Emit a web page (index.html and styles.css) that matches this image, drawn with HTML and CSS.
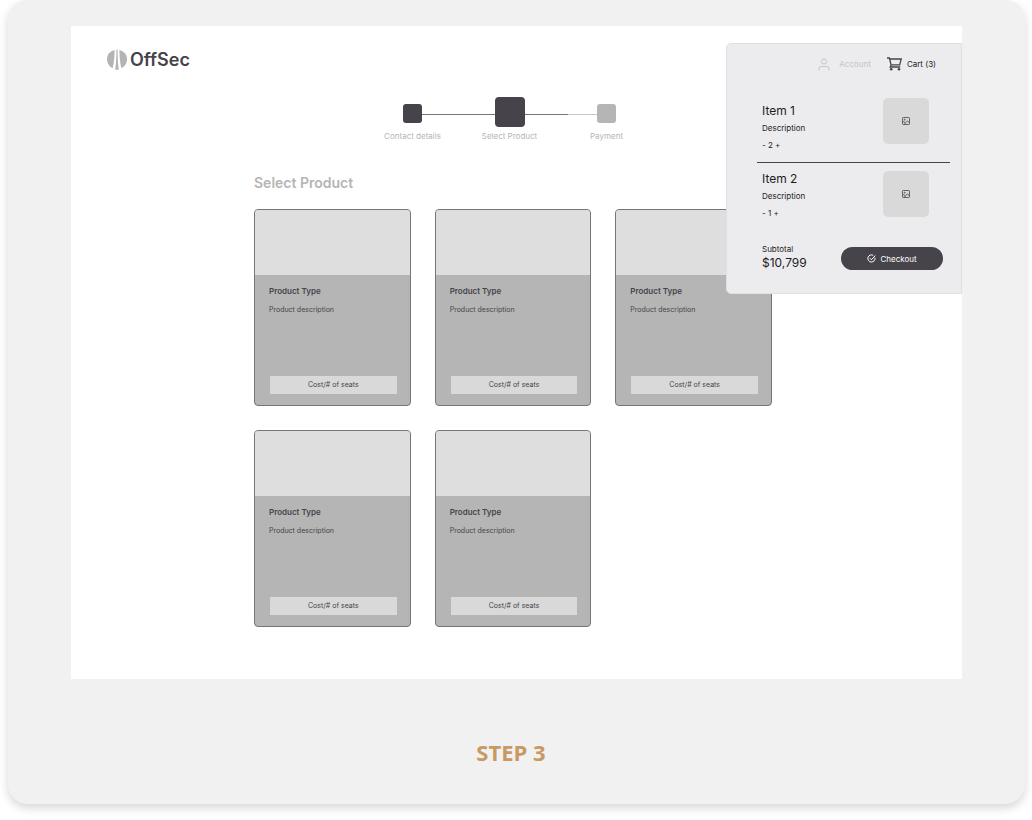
FILE: index.html
```html
<!DOCTYPE html>
<html lang="en">
<head>
    <meta charset="UTF-8">
    <meta name="viewport" content="width=device-width, initial-scale=1.0">
    <title>OffSec - Select Product</title>
    <link rel="stylesheet" href="styles.css">
</head>
<body>
    <div class="board">
        <div class="screen">
            <header class="header">
                <a class="logo" href="#">
                    <svg width="20" height="22" viewBox="0 0 20 22" aria-hidden="true">
                        <path d="M7.600 1C3 2 0 5.700 0 10s2.300 7.600 5.600 9.200C7 14 7.600 8 7.600 1z"/>
                        <path d="M12.400 1c4.600 1 7.600 4.700 7.600 9s-2.300 7.600-5.600 9.200C13 14 12.400 8 12.400 1z"/>
                        <path d="M9.400.6h1.200c0 8 .3 14 1.200 19.900-1.200.6-2.400.6-3.600 0C9.100 14.600 9.400 8.600 9.400.6z"/>
                    </svg>
                    <span>OffSec</span>
                </a>
            </header>

            <ol class="steps">
                <li class="step done"><span class="marker"></span><span class="step-label">Contact details</span></li>
                <li class="step current"><span class="marker"></span><span class="step-label">Select Product</span></li>
                <li class="step"><span class="marker"></span><span class="step-label">Payment</span></li>
            </ol>

            <main class="main">
                <h1>Select Product</h1>
                <div class="products">
                    <article class="product">
                        <div class="product-image"></div>
                        <div class="product-body">
                            <h2>Product Type</h2>
                            <p>Product description</p>
                            <button class="cost" type="button">Cost/# of seats</button>
                        </div>
                    </article>
                    <article class="product">
                        <div class="product-image"></div>
                        <div class="product-body">
                            <h2>Product Type</h2>
                            <p>Product description</p>
                            <button class="cost" type="button">Cost/# of seats</button>
                        </div>
                    </article>
                    <article class="product">
                        <div class="product-image"></div>
                        <div class="product-body">
                            <h2>Product Type</h2>
                            <p>Product description</p>
                            <button class="cost" type="button">Cost/# of seats</button>
                        </div>
                    </article>
                    <article class="product">
                        <div class="product-image"></div>
                        <div class="product-body">
                            <h2>Product Type</h2>
                            <p>Product description</p>
                            <button class="cost" type="button">Cost/# of seats</button>
                        </div>
                    </article>
                    <article class="product">
                        <div class="product-image"></div>
                        <div class="product-body">
                            <h2>Product Type</h2>
                            <p>Product description</p>
                            <button class="cost" type="button">Cost/# of seats</button>
                        </div>
                    </article>
                </div>
            </main>

            <aside class="cart">
                <nav class="cart-nav">
                    <a class="account" href="#">
                        <svg width="12" height="13" viewBox="0 0 12 13" aria-hidden="true">
                            <circle cx="6" cy="3.500" r="2.500"/>
                            <path d="M1 12.500v-1.500a2.500 2.500 0 0 1 2.500-2.500h5a2.500 2.500 0 0 1 2.500 2.500v1.500"/>
                        </svg>
                        <span>Account</span>
                    </a>
                    <a class="cart-link" href="#">
                        <svg width="15" height="14" viewBox="0 0 15 14" aria-hidden="true">
                            <path d="M0 1h2.400l1.700 7-.9 2h10M2.700 2h11.500l-1.500 5.800H4.100"/>
                            <circle class="wheel" cx="4.200" cy="12.300" r="1.300"/>
                            <circle class="wheel" cx="12" cy="12.300" r="1.300"/>
                        </svg>
                        <span>Cart (3)</span>
                    </a>
                </nav>

                <ul class="items">
                    <li class="item">
                        <div>
                            <h3>Item 1</h3>
                            <p>Description</p>
                            <div class="quantity"><button type="button" aria-label="Remove one">-</button> 2 <button type="button" aria-label="Add one">+</button></div>
                        </div>
                        <div class="thumb">
                            <svg width="10" height="10" viewBox="0 0 10 10" aria-hidden="true">
                                <rect x="1.500" y="1.500" width="7" height="7" rx=".8"/>
                                <circle cx="3.700" cy="3.700" r=".5"/>
                                <path d="M3 8.500l3.300-3.600 2.200 2M1.500 6.500l1.300-.9 1.600 1.300"/>
                            </svg>
                        </div>
                    </li>
                    <li class="item">
                        <div>
                            <h3>Item 2</h3>
                            <p>Description</p>
                            <div class="quantity"><button type="button" aria-label="Remove one">-</button> 1 <button type="button" aria-label="Add one">+</button></div>
                        </div>
                        <div class="thumb">
                            <svg width="10" height="10" viewBox="0 0 10 10" aria-hidden="true">
                                <rect x="1.500" y="1.500" width="7" height="7" rx=".8"/>
                                <circle cx="3.700" cy="3.700" r=".5"/>
                                <path d="M3 8.500l3.300-3.600 2.200 2M1.500 6.500l1.300-.9 1.600 1.300"/>
                            </svg>
                        </div>
                    </li>
                </ul>

                <div class="summary">
                    <div>
                        <div class="subtotal">Subtotal</div>
                        <div class="total">$10,799</div>
                    </div>
                    <button class="checkout" type="button">
                        <svg width="9" height="9" viewBox="0 0 9 9" aria-hidden="true">
                            <path d="M8 3.800a3.600 3.600 0 1 1-1.800-2.500M2.800 4.200l1.600 1.600 3.900-4.200"/>
                        </svg>
                        <span>Checkout</span>
                    </button>
                </div>
            </aside>
        </div>
        <p class="caption">STEP 3</p>
    </div>
</body>
</html>
```

FILE: styles.css
```css
* {
    box-sizing: border-box;
}
body {
    margin: 0;
    min-height: 100vh;
    padding-bottom: 16px;
    background: #fff;
    color: #1c1b1f;
    font-family: Inter, "Liberation Sans", sans-serif;
    font-size: 8px;
    line-height: 12px;
}
h1, h2, h3, p, ol, ul {
    margin: 0;
    padding: 0;
    font-weight: normal;
}
ol, ul {
    list-style: none;
}
a {
    color: inherit;
    text-decoration: none;
}
button {
    border: none;
    padding: 0;
    background: none;
    color: inherit;
    font: inherit;
    cursor: pointer;
}
svg {
    display: block;
    fill: none;
    stroke: currentColor;
}
.board {
    margin: 0 7px 0 8px;
    padding: 26px 63px 36px;
    background: #f1f1f1;
    border-radius: 20px;
    box-shadow: 0 4px 10px rgba(0, 0, 0, 0.16);
}
.screen {
    position: relative;
    background: #fff;
    padding-bottom: 52px;
}
.header {
    padding: 22px 36px 0;
}
.logo {
    display: inline-flex;
    align-items: center;
    gap: 3px;
    color: #46434a;
    font-size: 18px;
    font-weight: 600;
    line-height: 24px;
}
.logo svg {
    fill: #b4b4b4;
    stroke: none;
}

/* progress */
.steps {
    display: grid;
    grid-template-columns: repeat(3, 97px);
    margin: 23px 0 0 293px;
    color: #b5b5b5;
}
.step {
    display: grid;
    grid-template-columns: 1fr auto 1fr;
    grid-template-rows: 30px auto;
    row-gap: 3px;
    align-items: center;
}
.step::before, .step::after {
    content: "";
    height: 1px;
    margin-top: 4px;
    background: #77757a;
}
.step:first-child::before, .step:last-child::after {
    visibility: hidden;
}
.step:last-child::before {
    background: linear-gradient(to right, #77757a 10px, #c8c8c8 10px);
}
.marker {
    width: 19px;
    height: 19px;
    margin-top: 3px;
    border-radius: 3px;
    background: #b5b5b5;
}
.done .marker, .current .marker {
    background: #46434a;
}
.current .marker {
    width: 30px;
    height: 30px;
    margin-top: 0;
    border-radius: 4px;
}
.step-label {
    grid-area: 2 / 1 / 3 / 4;
    text-align: center;
}

/* products */
.main {
    padding: 31px 190px 0 183px;
}
h1 {
    color: #b5b5b5;
    font-size: 14px;
    font-weight: 600;
    line-height: 20px;
}
.products {
    display: grid;
    grid-template-columns: repeat(3, 1fr);
    gap: 24px;
    margin-top: 16px;
}
.product {
    display: flex;
    flex-direction: column;
    height: 197px;
    border: 1px solid #77757a;
    border-radius: 4px;
    background: #b5b5b5;
    color: #46434a;
    overflow: hidden;
}
.product-image {
    height: 65px;
    background: #dedede;
}
.product-body {
    flex: 1;
    display: flex;
    flex-direction: column;
    padding: 10px 13px 11px 14px;
}
.product h2 {
    font-size: 8px;
    font-weight: 600;
}
.product p {
    margin-top: 7px;
    font-size: 7px;
}
.cost {
    margin: auto 0 0 1px;
    height: 18px;
    background: #d9d9d9;
    font-size: 7px;
}

/* cart popover */
.cart {
    position: absolute;
    top: 17px;
    right: 0;
    width: 236px;
    padding: 13px 11px 23px 30px;
    border: 1px solid #dfdfe0;
    border-radius: 5px 0 0 5px;
    background: #ececee;
}
.cart-nav {
    display: flex;
    justify-content: flex-end;
    gap: 16px;
    padding-right: 14px;
}
.account, .cart-link {
    display: flex;
    align-items: center;
    gap: 5px;
    line-height: 14px;
}
.account {
    gap: 9px;
    color: #c4c4c6;
}
.cart-link svg {
    color: #46434a;
    stroke-width: 1.3;
}
.wheel {
    fill: currentColor;
    stroke: none;
}
.items {
    margin-top: 27px;
}
.item {
    display: flex;
    justify-content: space-between;
    padding: 0 21px 11px 5px;
}
.item:first-child h3 {
    margin-top: 5px;
}
.item + .item {
    border-top: 1px solid #46434a;
    padding-top: 8px;
}
.item h3 {
    font-size: 12px;
    line-height: 16px;
}
.item p {
    margin-top: 3px;
}
.quantity {
    margin-top: 5px;
}
.thumb {
    display: flex;
    align-items: center;
    justify-content: center;
    width: 46px;
    height: 46px;
    border-radius: 5px;
    background: #d9d9d9;
    color: #46434a;
}
.thumb svg {
    stroke-width: .8;
}
.summary {
    display: flex;
    align-items: flex-end;
    justify-content: space-between;
    padding: 13px 7px 0 5px;
}
.total {
    font-size: 12px;
    line-height: 15px;
}
.checkout {
    display: flex;
    align-items: center;
    justify-content: center;
    gap: 4px;
    width: 102px;
    height: 23px;
    border-radius: 12px;
    background: #46434a;
    color: #fff;
}
.caption {
    margin-top: 57px;
    padding-right: 11px;
    color: #c89a63;
    font-family: "Open Sans", "Noto Sans", sans-serif;
    font-size: 22px;
    font-weight: 700;
    line-height: 32px;
    text-align: center;
}
```
